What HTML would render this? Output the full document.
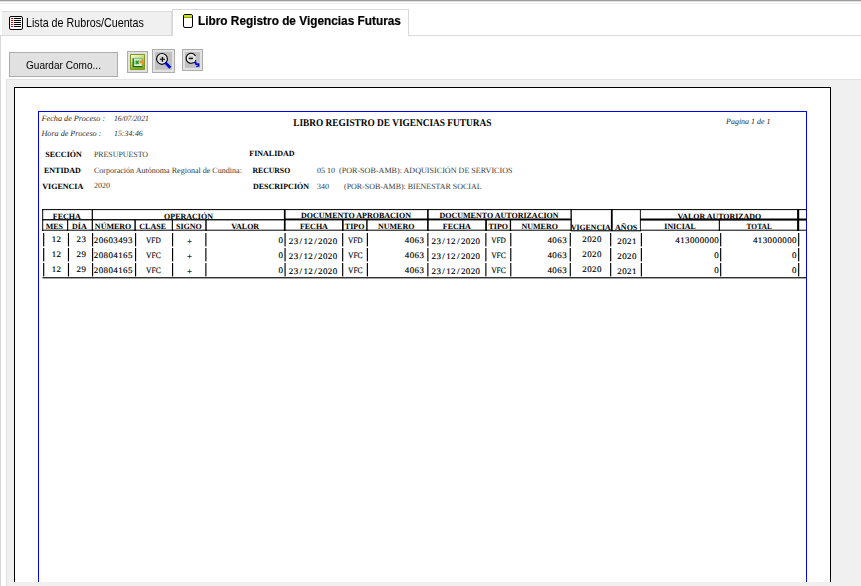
<!DOCTYPE html>
<html lang="es">
<head>
<meta charset="utf-8">
<title>Libro Registro de Vigencias Futuras</title>
<style>
html,body{margin:0;padding:0;}
body{width:861px;height:586px;overflow:hidden;background:#fff;position:relative;font-family:"Liberation Sans",sans-serif;font-size:11px;color:#000;}
.a{position:absolute;white-space:nowrap;}
#shade{left:0;top:0;width:861px;height:2px;background:linear-gradient(#9c9c9c 0,#9c9c9c 1px,#e2e2e2 1px,#e2e2e2 2px);}
#hl{left:0;top:3px;width:861px;height:1px;background:#f0f0f0;}
#pane{left:0;top:35px;width:861px;height:551px;border-top:1px solid #d9d9d9;border-left:1px solid #d9d9d9;box-sizing:border-box;background:#fff;}
#tab1{left:2px;top:11px;width:170px;height:24px;background:#f0f0f0;border:1px solid #dcdcdc;border-left-color:#ececec;border-bottom:none;box-sizing:border-box;}
#tab2{left:172px;top:9px;width:237px;height:27px;background:#fff;border:1px solid #d9d9d9;border-bottom:none;box-sizing:border-box;}
#t1{left:26px;top:14.7px;line-height:16px;font-size:12.4px;transform-origin:0 0;transform:scaleX(0.8646);}
#t2{left:198px;top:12.6px;line-height:16px;font-size:12px;font-weight:bold;transform-origin:0 0;transform:scaleX(0.986);-webkit-text-stroke:0.2px #000;}
#btn{left:9px;top:52px;width:109px;height:25px;box-sizing:border-box;background:#e1e1e1;border:1px solid #adadad;text-align:center;line-height:24px;font-size:12px;}
#bt{left:26px;top:56.5px;line-height:16px;font-size:11.4px;transform-origin:0 0;transform:scaleX(0.8834);}
.ib{box-sizing:border-box;background:#e1e1e1;border:1px solid #adadad;}
#prev{left:6px;top:79px;width:855px;height:507px;background:#f0f0f0;border-top:1px solid #e3e3e3;border-left:1px solid #e3e3e3;box-sizing:border-box;}
#page{left:14px;top:87px;width:817px;height:495px;background:#fff;border:1px solid #000;border-bottom:none;box-sizing:border-box;}
#blue{left:38px;top:111px;width:769px;height:471px;border:1px solid #0000f0;border-bottom:none;box-sizing:border-box;}
#rep text{font-family:"Liberation Serif",serif;font-size:8px;fill:#000;text-rendering:geometricPrecision;}
#rep .d{text-anchor:middle;font-size:8.5px;stroke:#000;stroke-width:0.14px;}
#rep .i{font-style:italic;fill:#2a2a2a;}
#rep .b{font-weight:bold;}
#rep .n{fill:#3a3a3a;}
</style>
</head>
<body>
<div class="a" id="shade"></div>
<div class="a" id="hl"></div>
<div class="a" id="pane"></div>
<div class="a" id="tab1"></div>
<div class="a" id="tab2"></div>
<svg class="a" style="left:9px;top:16px" width="15" height="15" viewBox="0 0 15 15">
<rect x="0.5" y="0.5" width="13" height="13" rx="1.5" fill="#fff" stroke="#000"/>
<path d="M5 2.5H12M5 4.5H12M5 6.5H12M5 8.5H12M5 10.5H12" stroke="#000" stroke-width="1"/>
<path d="M2 2.5H4M2 4.5H4M2 6.5H4M2 8.5H4M2 10.5H4" stroke="#e60000" stroke-width="1"/>
</svg>
<div class="a" id="t1">Lista de Rubros/Cuentas</div>
<svg class="a" style="left:183px;top:14px" width="10" height="14" viewBox="0 0 10 14">
<rect x="0.5" y="0.5" width="9" height="13" rx="1.5" fill="#fff" stroke="#000"/>
<rect x="1" y="1" width="8" height="2.4" fill="#c8e400"/><rect x="1" y="3.2" width="8" height="0.7" fill="#6a7a00"/>
</svg>
<div class="a" id="t2">Libro Registro de Vigencias Futuras</div>
<div class="a" id="btn"></div>
<div class="a" id="bt">Guardar Como...</div>
<div class="a ib" style="left:127px;top:51px;width:21px;height:22px"></div>
<svg class="a" style="left:129px;top:53px" width="18" height="18" viewBox="0 0 18 18">
<defs>
<linearGradient id="g1" x1="0" y1="0" x2="0.5" y2="1"><stop offset="0" stop-color="#fbfdf2"/><stop offset="0.35" stop-color="#d6e6a4"/><stop offset="0.7" stop-color="#acc64c"/><stop offset="1" stop-color="#90ac24"/></linearGradient>
<linearGradient id="g2" x1="0" y1="0" x2="0.2" y2="1"><stop offset="0" stop-color="#eef8e4"/><stop offset="0.55" stop-color="#8fd68f"/><stop offset="1" stop-color="#eefaea"/></linearGradient>
<filter id="bl" x="-10%" y="-10%" width="120%" height="120%"><feGaussianBlur stdDeviation="0.5"/></filter>
</defs>
<g filter="url(#bl)">
<rect x="1" y="1" width="15" height="16" rx="0.8" fill="#82991a"/>
<rect x="2" y="2" width="13" height="13.6" fill="url(#g1)"/>
<rect x="4.2" y="5.4" width="9" height="8" fill="url(#g2)"/>
<path d="M4.2 5.2V13.6H13.4" fill="none" stroke="#0e680e" stroke-width="1.25"/>
<path d="M4.2 5.4H13.2V13.4" fill="none" stroke="#6cac6c" stroke-width="0.7"/>
<path d="M6.8 7.9L9.6 11M9.6 7.9L6.8 11" stroke="#2e8c2e" stroke-width="1.2"/>
<path d="M10.6 8.3h2.1V6.6l2.9 2.6-2.9 2.6V10.1h-2.1z" fill="#ff8c1a"/>
</g>
</svg>
<div class="a ib" style="left:152px;top:49px;width:23px;height:24px"></div>
<svg class="a" style="left:155px;top:52px" width="18" height="18" viewBox="0 0 18 18">
<defs><radialGradient id="g3" cx="0.5" cy="0.5" r="0.5"><stop offset="0" stop-color="#c4c4c4"/><stop offset="0.55" stop-color="#cfcfcf"/><stop offset="0.8" stop-color="#f4f4f4"/><stop offset="1" stop-color="#e0e0e0"/></radialGradient></defs>
<rect width="17" height="17.7" fill="#c0c0c0"/>
<circle cx="7" cy="6.9" r="5.4" fill="url(#g3)" stroke="#000" stroke-width="1.15"/>
<path d="M5 7.25h4.9M7.45 5v4.7" stroke="#000" stroke-width="1.2"/>
<path d="M11 11.6L14.3 14.8" stroke="#0000d0" stroke-width="2.9" stroke-linecap="square"/>
<path d="M9.9 12L13.4 15.6" stroke="#e8e8ff" stroke-width="0.6" stroke-dasharray="0.9 0.9"/>
</svg>
<div class="a ib" style="left:182px;top:49px;width:21px;height:22px"></div>
<svg class="a" style="left:185px;top:52px" width="16" height="16" viewBox="0 0 16 16">
<rect width="15" height="15.8" fill="#c0c0c0"/>
<circle cx="6" cy="6.3" r="4.6" fill="url(#g3)" stroke="none"/>
<path d="M10.5 3.9A5 5 0 1 0 8.6 10.6" fill="none" stroke="#000" stroke-width="1.15"/>
<path d="M10.6 8v1.6" stroke="#000" stroke-width="1"/>
<path d="M3.8 6.4h4.1" stroke="#000" stroke-width="1.3"/>
<path d="M8.6 10.7l2.1-0.5 0.3 2.1 2.6-0.4 0.2 2-2.4 0.7" fill="none" stroke="#0000d0" stroke-width="1.5" stroke-linejoin="round"/>
</svg>
<div class="a" id="prev"></div>
<div class="a" id="page"></div>
<div class="a" id="blue"></div>
<!--REPORT-->
<svg class="a" id="rep" style="left:0;top:0" width="861" height="586" viewBox="0 0 861 586">
<text class="i" x="41.5" y="121" textLength="63.7" lengthAdjust="spacingAndGlyphs">Fecha de Proceso :</text>
<text class="i" x="114" y="121" textLength="34.8" lengthAdjust="spacingAndGlyphs">16/07/2021</text>
<text class="i" x="41.5" y="136" textLength="59.9" lengthAdjust="spacingAndGlyphs">Hora de Proceso :</text>
<text class="i" x="114" y="136" textLength="28.8" lengthAdjust="spacingAndGlyphs">15:34:46</text>
<text class="b" x="293.2" y="126" style="font-size:10.3px" textLength="198.2" lengthAdjust="spacingAndGlyphs">LIBRO REGISTRO DE VIGENCIAS FUTURAS</text>
<text class="i" x="726.1" y="124" textLength="44.4" lengthAdjust="spacingAndGlyphs">Pagina 1 de 1</text>
<text class="b" x="45.3" y="156.6">SECCIÓN</text>
<text class="n" x="93.9" y="156.6" textLength="54.1" lengthAdjust="spacingAndGlyphs">PRESUPUESTO</text>
<text class="b" x="44" y="172.6">ENTIDAD</text>
<text class="n" x="93.9" y="172.6" textLength="148" lengthAdjust="spacingAndGlyphs">Corporación Autónoma Regional de Cundina:</text>
<text class="b" x="42.3" y="188.5">VIGENCIA</text>
<text class="n" x="93.9" y="188.3">2020</text>
<text class="b" x="249.3" y="156">FINALIDAD</text>
<text class="b" x="252.4" y="172.7" textLength="37.8" lengthAdjust="spacingAndGlyphs">RECURSO</text>
<text class="n" x="316.9" y="172.7">05 10</text>
<text class="n" x="339" y="172.7" textLength="173.5" lengthAdjust="spacingAndGlyphs">(POR-SOB-AMB): ADQUISICIÓN DE SERVICIOS</text>
<text class="b" x="253" y="188.6">DESCRIPCIÓN</text>
<text class="n" x="316.9" y="188.6">340</text>
<text class="n" x="344" y="188.6" textLength="137.5" lengthAdjust="spacingAndGlyphs">(POR-SOB-AMB): BIENESTAR SOCIAL</text>
<text class="b" x="66.8" y="219" text-anchor="middle">FECHA</text>
<text class="b" x="188.5" y="219" text-anchor="middle">OPERACIÓN</text>
<text class="b" x="356" y="218.4" text-anchor="middle">DOCUMENTO APROBACION</text>
<text class="b" x="499" y="218.4" text-anchor="middle">DOCUMENTO AUTORIZACION</text>
<text class="b" x="719.4" y="218.8" text-anchor="middle" textLength="83.6" lengthAdjust="spacingAndGlyphs">VALOR AUTORIZADO</text>
<text class="b" x="54.4" y="229" text-anchor="middle">MES</text>
<text class="b" x="79.4" y="229" text-anchor="middle">DÍA</text>
<text class="b" x="113.1" y="229" text-anchor="middle">NÚMERO</text>
<text class="b" x="152.7" y="229" text-anchor="middle">CLASE</text>
<text class="b" x="188.9" y="229" text-anchor="middle">SIGNO</text>
<text class="b" x="245.2" y="229" text-anchor="middle">VALOR</text>
<text class="b" x="313.9" y="229" text-anchor="middle">FECHA</text>
<text class="b" x="354.6" y="229" text-anchor="middle">TIPO</text>
<text class="b" x="396.2" y="229" text-anchor="middle">NUMERO</text>
<text class="b" x="456.8" y="229" text-anchor="middle">FECHA</text>
<text class="b" x="498.3" y="229" text-anchor="middle">TIPO</text>
<text class="b" x="539.7" y="229" text-anchor="middle">NUMERO</text>
<text class="b" x="570.9" y="230" textLength="39.8" lengthAdjust="spacingAndGlyphs">VIGENCIA</text>
<text class="b" x="626.2" y="230" text-anchor="middle">AÑOS</text>
<text class="b" x="680" y="229" text-anchor="middle" textLength="31.3" lengthAdjust="spacingAndGlyphs">INICIAL</text>
<text class="b" x="759.2" y="229" text-anchor="middle" textLength="25.3" lengthAdjust="spacingAndGlyphs">TOTAL</text>
<rect x="42.2" y="209.1" width="764.8" height="1"/>
<rect x="42.2" y="219.1" width="241.8" height="1.3"/>
<rect x="284" y="218.5" width="287.5" height="1.9"/>
<rect x="640" y="218.5" width="167" height="2.1"/>
<rect x="42.2" y="229.7" width="528.8" height="1"/>
<rect x="571" y="230.2" width="70" height="1.1"/>
<rect x="641" y="229.7" width="166" height="1"/>
<rect x="42.2" y="209.1" width="1" height="21.900000000000006"/>
<rect x="67.1" y="220" width="1.1" height="11"/>
<rect x="91.7" y="209.1" width="1.2" height="21.900000000000006"/>
<rect x="134.4" y="220" width="1.4" height="11"/>
<rect x="171.8" y="220" width="1.1" height="11"/>
<rect x="205.3" y="220" width="1.4" height="11"/>
<rect x="283.9" y="209.1" width="1.7" height="21.900000000000006"/>
<rect x="342" y="220" width="1.6" height="11"/>
<rect x="366.2" y="220" width="1.4" height="11"/>
<rect x="427.1" y="209.1" width="1.6" height="21.900000000000006"/>
<rect x="485.2" y="220" width="1.7" height="11"/>
<rect x="509.8" y="220" width="1.3" height="11"/>
<rect x="570.5" y="209.1" width="1.3" height="21.900000000000006"/>
<rect x="610.9" y="209.1" width="1.8" height="21.900000000000006"/>
<rect x="639.9" y="209.1" width="0.9" height="21.900000000000006"/>
<rect x="718.8" y="220" width="1.1" height="11"/>
<rect x="797.1" y="209.1" width="2.1" height="21.900000000000006"/>
<rect x="43.1" y="233" width="1.15" height="13.4"/>
<rect x="67.9" y="233" width="1.15" height="13.4"/>
<rect x="92.0" y="233" width="1.15" height="13.4"/>
<rect x="135.0" y="233" width="1.15" height="13.4"/>
<rect x="172.0" y="233" width="1.15" height="13.4"/>
<rect x="205.3" y="233" width="1.15" height="13.4"/>
<rect x="284.5" y="233" width="1.15" height="13.4"/>
<rect x="342.1" y="233" width="1.15" height="13.4"/>
<rect x="366.8" y="233" width="1.15" height="13.4"/>
<rect x="427.3" y="233" width="1.15" height="13.4"/>
<rect x="485.3" y="233" width="1.15" height="13.4"/>
<rect x="510.2" y="233" width="1.15" height="13.4"/>
<rect x="569.7" y="233" width="1.15" height="13.4"/>
<rect x="610.1" y="233" width="1.15" height="13.4"/>
<rect x="640.8" y="233" width="1.15" height="13.4"/>
<rect x="720.1" y="233" width="1.15" height="13.4"/>
<rect x="798.1" y="233" width="1.15" height="13.4"/>
<text class="d" transform="scale(1.05,1)" x="51.34 55.99" y="242">12</text>
<text class="d" transform="scale(1.05,1)" x="75.1 79.75" y="242">23</text>
<text class="d" transform="scale(1.05,1)" x="91.47 96.11 100.76 105.41 110.06 114.7 119.35 124" y="243">20603493</text>
<text class="d" x="153.4" y="243" text-anchor="middle" style="font-size:8.4px" textLength="14.7" lengthAdjust="spacingAndGlyphs">VFD</text>
<text class="d" transform="scale(1.05,1)" x="180.57" y="243.5">+</text>
<text class="d" transform="scale(1.05,1)" x="267.3" y="243">0</text>
<text class="d" transform="scale(1.05,1)" x="277.18 281.83 286.48 291.12 295.77 300.42 305.07 309.71 314.36 319.01" y="244">23/12/2020</text>
<text class="d" x="355.3" y="243" text-anchor="middle" style="font-size:8.4px" textLength="14.7" lengthAdjust="spacingAndGlyphs">VFD</text>
<text class="d" transform="scale(1.05,1)" x="387.64 392.29 396.93 401.58" y="243">4063</text>
<text class="d" transform="scale(1.05,1)" x="413.18 417.83 422.48 427.12 431.77 436.42 441.07 445.71 450.36 455.01" y="244">23/12/2020</text>
<text class="d" x="498.5" y="243" text-anchor="middle" style="font-size:8.4px" textLength="14.7" lengthAdjust="spacingAndGlyphs">VFD</text>
<text class="d" transform="scale(1.05,1)" x="523.54 528.19 532.84 537.49" y="243">4063</text>
<text class="d" transform="scale(1.05,1)" x="556.74 561.39 566.04 570.69" y="242">2020</text>
<text class="d" transform="scale(1.05,1)" x="590.08 594.72 599.37 604.02" y="244">2021</text>
<text class="d" transform="scale(1.05,1)" x="645.26 649.9 654.55 659.2 663.85 668.5 673.14 677.79 682.44" y="243">413000000</text>
<text class="d" transform="scale(1.05,1)" x="719.26 723.9 728.55 733.2 737.85 742.5 747.14 751.79 756.44" y="243">413000000</text>
<rect x="43.1" y="248" width="1.15" height="13.4"/>
<rect x="67.9" y="248" width="1.15" height="13.4"/>
<rect x="92.0" y="248" width="1.15" height="13.4"/>
<rect x="135.0" y="248" width="1.15" height="13.4"/>
<rect x="172.0" y="248" width="1.15" height="13.4"/>
<rect x="205.3" y="248" width="1.15" height="13.4"/>
<rect x="284.5" y="248" width="1.15" height="13.4"/>
<rect x="342.1" y="248" width="1.15" height="13.4"/>
<rect x="366.8" y="248" width="1.15" height="13.4"/>
<rect x="427.3" y="248" width="1.15" height="13.4"/>
<rect x="485.3" y="248" width="1.15" height="13.4"/>
<rect x="510.2" y="248" width="1.15" height="13.4"/>
<rect x="569.7" y="248" width="1.15" height="13.4"/>
<rect x="610.1" y="248" width="1.15" height="13.4"/>
<rect x="640.8" y="248" width="1.15" height="13.4"/>
<rect x="720.1" y="248" width="1.15" height="13.4"/>
<rect x="798.1" y="248" width="1.15" height="13.4"/>
<text class="d" transform="scale(1.05,1)" x="51.34 55.99" y="257">12</text>
<text class="d" transform="scale(1.05,1)" x="75.1 79.75" y="257">29</text>
<text class="d" transform="scale(1.05,1)" x="91.47 96.11 100.76 105.41 110.06 114.7 119.35 124" y="258">20804165</text>
<text class="d" x="153.4" y="258" text-anchor="middle" style="font-size:8.4px" textLength="14.7" lengthAdjust="spacingAndGlyphs">VFC</text>
<text class="d" transform="scale(1.05,1)" x="180.57" y="258.5">+</text>
<text class="d" transform="scale(1.05,1)" x="267.3" y="258">0</text>
<text class="d" transform="scale(1.05,1)" x="277.18 281.83 286.48 291.12 295.77 300.42 305.07 309.71 314.36 319.01" y="259">23/12/2020</text>
<text class="d" x="355.3" y="258" text-anchor="middle" style="font-size:8.4px" textLength="14.7" lengthAdjust="spacingAndGlyphs">VFC</text>
<text class="d" transform="scale(1.05,1)" x="387.64 392.29 396.93 401.58" y="258">4063</text>
<text class="d" transform="scale(1.05,1)" x="413.18 417.83 422.48 427.12 431.77 436.42 441.07 445.71 450.36 455.01" y="259">23/12/2020</text>
<text class="d" x="498.5" y="258" text-anchor="middle" style="font-size:8.4px" textLength="14.7" lengthAdjust="spacingAndGlyphs">VFC</text>
<text class="d" transform="scale(1.05,1)" x="523.54 528.19 532.84 537.49" y="258">4063</text>
<text class="d" transform="scale(1.05,1)" x="556.74 561.39 566.04 570.69" y="257">2020</text>
<text class="d" transform="scale(1.05,1)" x="590.08 594.72 599.37 604.02" y="259">2020</text>
<text class="d" transform="scale(1.05,1)" x="682.44" y="258">0</text>
<text class="d" transform="scale(1.05,1)" x="756.44" y="258">0</text>
<rect x="43.1" y="263" width="1.15" height="13.4"/>
<rect x="67.9" y="263" width="1.15" height="13.4"/>
<rect x="92.0" y="263" width="1.15" height="13.4"/>
<rect x="135.0" y="263" width="1.15" height="13.4"/>
<rect x="172.0" y="263" width="1.15" height="13.4"/>
<rect x="205.3" y="263" width="1.15" height="13.4"/>
<rect x="284.5" y="263" width="1.15" height="13.4"/>
<rect x="342.1" y="263" width="1.15" height="13.4"/>
<rect x="366.8" y="263" width="1.15" height="13.4"/>
<rect x="427.3" y="263" width="1.15" height="13.4"/>
<rect x="485.3" y="263" width="1.15" height="13.4"/>
<rect x="510.2" y="263" width="1.15" height="13.4"/>
<rect x="569.7" y="263" width="1.15" height="13.4"/>
<rect x="610.1" y="263" width="1.15" height="13.4"/>
<rect x="640.8" y="263" width="1.15" height="13.4"/>
<rect x="720.1" y="263" width="1.15" height="13.4"/>
<rect x="798.1" y="263" width="1.15" height="13.4"/>
<text class="d" transform="scale(1.05,1)" x="51.34 55.99" y="272">12</text>
<text class="d" transform="scale(1.05,1)" x="75.1 79.75" y="272">29</text>
<text class="d" transform="scale(1.05,1)" x="91.47 96.11 100.76 105.41 110.06 114.7 119.35 124" y="273">20804165</text>
<text class="d" x="153.4" y="273" text-anchor="middle" style="font-size:8.4px" textLength="14.7" lengthAdjust="spacingAndGlyphs">VFC</text>
<text class="d" transform="scale(1.05,1)" x="180.57" y="273.5">+</text>
<text class="d" transform="scale(1.05,1)" x="267.3" y="273">0</text>
<text class="d" transform="scale(1.05,1)" x="277.18 281.83 286.48 291.12 295.77 300.42 305.07 309.71 314.36 319.01" y="274">23/12/2020</text>
<text class="d" x="355.3" y="273" text-anchor="middle" style="font-size:8.4px" textLength="14.7" lengthAdjust="spacingAndGlyphs">VFC</text>
<text class="d" transform="scale(1.05,1)" x="387.64 392.29 396.93 401.58" y="273">4063</text>
<text class="d" transform="scale(1.05,1)" x="413.18 417.83 422.48 427.12 431.77 436.42 441.07 445.71 450.36 455.01" y="274">23/12/2020</text>
<text class="d" x="498.5" y="273" text-anchor="middle" style="font-size:8.4px" textLength="14.7" lengthAdjust="spacingAndGlyphs">VFC</text>
<text class="d" transform="scale(1.05,1)" x="523.54 528.19 532.84 537.49" y="273">4063</text>
<text class="d" transform="scale(1.05,1)" x="556.74 561.39 566.04 570.69" y="272">2020</text>
<text class="d" transform="scale(1.05,1)" x="590.08 594.72 599.37 604.02" y="274">2021</text>
<text class="d" transform="scale(1.05,1)" x="682.44" y="273">0</text>
<text class="d" transform="scale(1.05,1)" x="756.44" y="273">0</text>
<rect x="42.5" y="277.2" width="764.5" height="1.15"/>
</svg>
<!--/REPORT-->
</body>
</html>
